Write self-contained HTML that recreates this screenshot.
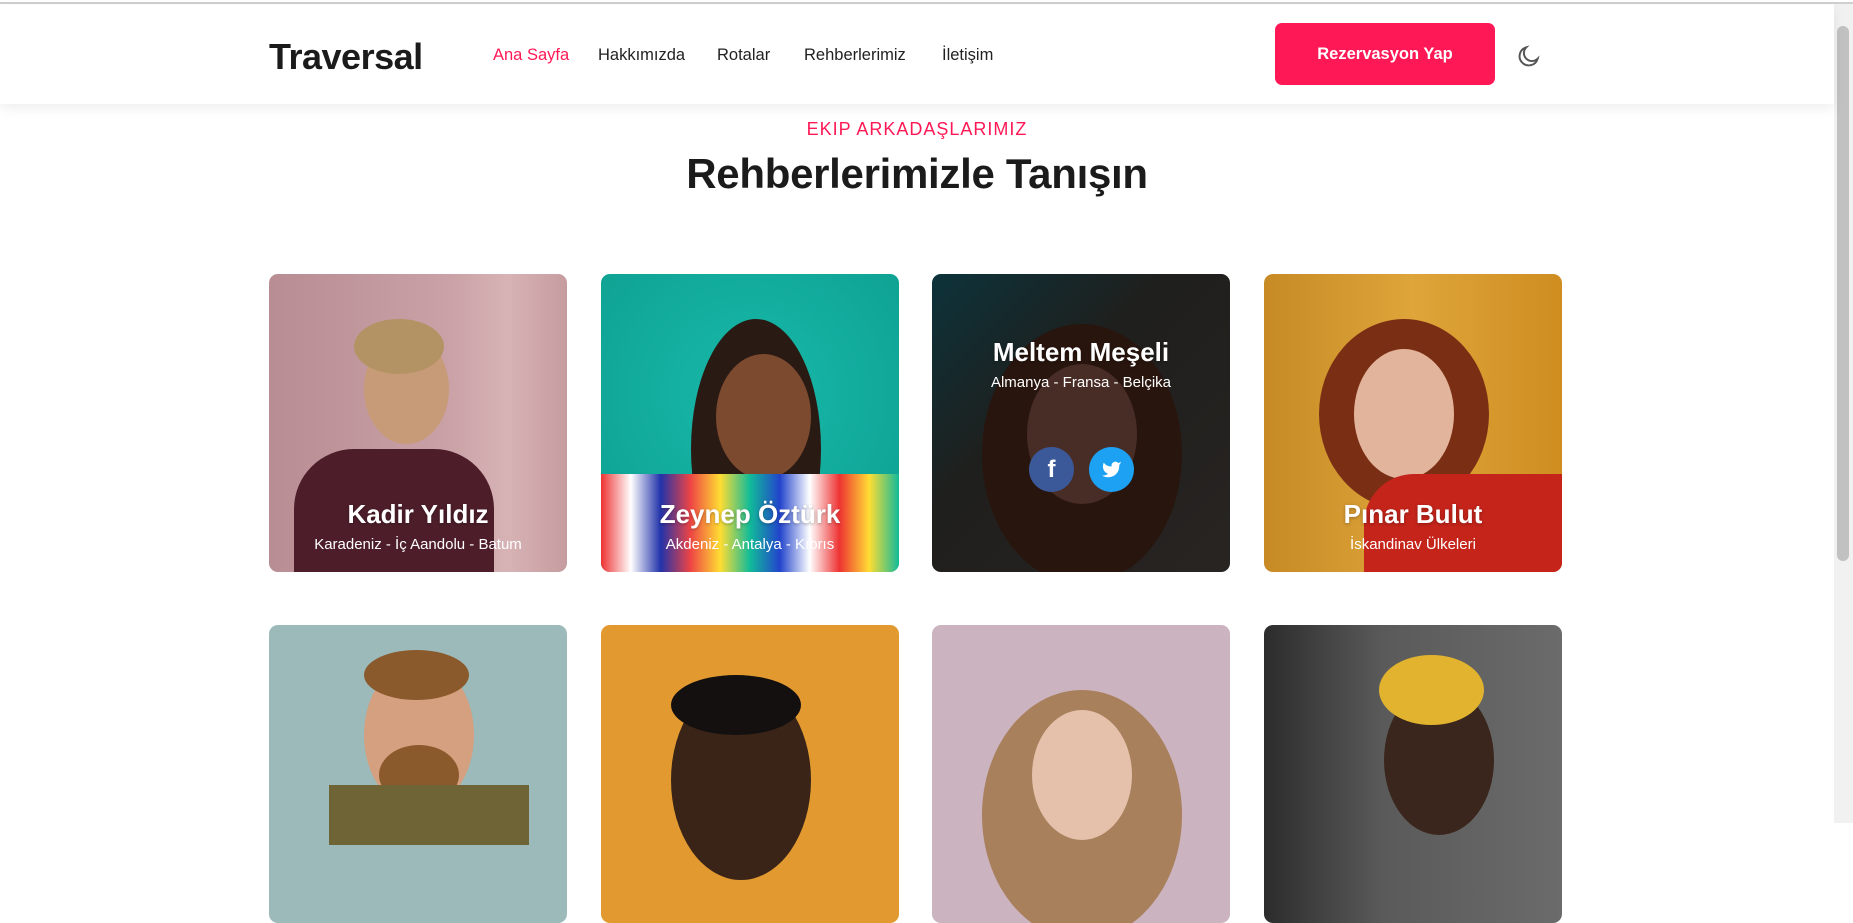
<!DOCTYPE html>
<html><head><meta charset="utf-8"><style>
*{margin:0;padding:0;box-sizing:border-box}
html,body{width:1853px;height:823px;overflow:hidden;background:#fff;font-family:"Liberation Sans",sans-serif}
.topline{position:absolute;left:0;top:0;width:1853px;height:4px;background:#fff;border-bottom:2px solid #cfcfcf}
header{position:absolute;left:0;top:5px;width:1834px;height:99px;background:#fff;box-shadow:0 4px 12px rgba(0,0,0,.07);z-index:2}
.logo{position:absolute;left:269px;top:31px;font-size:36px;font-weight:bold;color:#1b1b1b;letter-spacing:-.5px}
nav a{position:absolute;top:41px;font-size:16.5px;color:#222;text-decoration:none}
.btn{position:absolute;left:1275px;top:18px;width:220px;height:62px;background:#ff1856;border-radius:7px;color:#fff;font-weight:bold;font-size:16.5px;text-align:center;line-height:62px}
.moon{position:absolute;left:1516px;top:38px}
.scroll{position:absolute;left:1834px;top:4px;width:19px;height:819px;background:#f1f1f1}
.thumb{position:absolute;left:1837px;top:26px;width:12px;height:535px;background:#c1c1c1;border-radius:6px}
.kick{position:absolute;left:0;width:1834px;top:119px;text-align:center;color:#ff1856;font-size:18px;letter-spacing:1px}
h1{position:absolute;left:0;width:1834px;top:150px;text-align:center;font-size:42px;color:#1b1b1b;font-weight:bold;letter-spacing:-.3px}
.card{position:absolute;width:298px;height:298px;border-radius:9px;overflow:hidden}
.card .n{position:absolute;left:0;width:100%;text-align:center;color:#fff;font-weight:bold;font-size:26px;text-shadow:0 1px 3px rgba(0,0,0,.3)}
.card .s{position:absolute;left:0;width:100%;text-align:center;color:#fff;font-size:15px}
.blob{position:absolute;border-radius:50%}
</style></head><body>
<div class="topline"></div>
<header>
<div class="logo">Traversal</div>
<nav>
<a style="left:493px;color:#ff1856">Ana Sayfa</a>
<a style="left:598px">Hakkımızda</a>
<a style="left:717px">Rotalar</a>
<a style="left:804px">Rehberlerimiz</a>
<a style="left:942px">İletişim</a>
</nav>
<div class="btn">Rezervasyon Yap</div>
<svg class="moon" width="26" height="26" viewBox="0 0 24 24" fill="none" stroke="#555" stroke-width="1.8"><path d="M20 14.5A8.5 8.5 0 1 1 9.5 4a7 7 0 0 0 10.5 10.5z"/></svg>
</header>
<div class="scroll"></div><div class="thumb"></div>
<div class="kick">EKIP ARKADAŞLARIMIZ</div>
<h1>Rehberlerimizle Tanışın</h1>

<div class="card" style="left:269px;top:274px;background:linear-gradient(90deg,#b88d93,#c9a1a6 60%,#d7b3b5 80%,#c69c9f)">
<div class="blob" style="left:95px;top:60px;width:85px;height:110px;background:#c89b78"></div>
<div class="blob" style="left:85px;top:45px;width:90px;height:55px;background:#b39363"></div>
<div style="position:absolute;left:25px;top:175px;width:200px;height:160px;background:#4d1e2a;border-radius:60px 60px 0 0"></div>
<div class="n" style="top:225px">Kadir Yıldız</div><div class="s" style="top:262px">Karadeniz - İç Aandolu - Batum</div></div>

<div class="card" style="left:601px;top:274px;background:radial-gradient(circle at 50% 40%,#18b9aa,#0fa394 80%)">
<div class="blob" style="left:90px;top:45px;width:130px;height:260px;background:#2a1a14"></div>
<div class="blob" style="left:115px;top:80px;width:95px;height:125px;background:#7c4a2f"></div>
<div style="position:absolute;left:0;top:200px;width:298px;height:100px;background:linear-gradient(90deg,#e33,#fff 10%,#23a 20%,#e44 30%,#fd3 40%,#1b9 50%,#24c 60%,#fff 70%,#e33 80%,#fd3 90%,#1b9)"></div>
<div class="n" style="top:225px">Zeynep Öztürk</div><div class="s" style="top:262px">Akdeniz - Antalya - Kıbrıs</div></div>

<div class="card" style="left:932px;top:274px;background:linear-gradient(135deg,#0f4a55,#2b2b28 40%,#3a3430)">
<div class="blob" style="left:50px;top:50px;width:200px;height:260px;background:#3a1c12"></div>
<div class="blob" style="left:95px;top:90px;width:110px;height:140px;background:#6a4036"></div>
<div style="position:absolute;inset:0;background:rgba(10,10,10,.35)"></div>
<div class="n" style="top:63px">Meltem Meşeli</div><div class="s" style="top:100px">Almanya - Fransa - Belçika</div>
<div class="blob" style="left:97px;top:173px;width:45px;height:45px;background:#3b5998;color:#fff;font-weight:bold;font-size:24px;text-align:center;line-height:46px">f</div>
<div class="blob" style="left:157px;top:173px;width:45px;height:45px;background:#1da1f2"><svg width="45" height="45" viewBox="0 0 24 24"><path transform="translate(6.5 6.5) scale(.46)" fill="#fff" d="M23 3a10.9 10.9 0 0 1-3.1 1.5 4.5 4.5 0 0 0-7.9 3v1A10.7 10.7 0 0 1 3 4s-4 9 5 13a11.6 11.6 0 0 1-7 2c9 5 20 0 20-11.5a4.5 4.5 0 0 0-.1-.8A7.7 7.7 0 0 0 23 3z"/></svg></div></div>

<div class="card" style="left:1264px;top:274px;background:linear-gradient(90deg,#c78a25,#dea53a 50%,#cf8d20)">
<div class="blob" style="left:55px;top:45px;width:170px;height:190px;background:#7a2e14"></div>
<div class="blob" style="left:90px;top:75px;width:100px;height:130px;background:#e3b49c"></div>
<div style="position:absolute;left:100px;top:200px;width:220px;height:120px;background:#c4241a;border-radius:50px 0 0 0"></div>
<div class="n" style="top:225px">Pınar Bulut</div><div class="s" style="top:262px">İskandinav Ülkeleri</div></div>

<div class="card" style="left:269px;top:625px;background:#9bbab9">
<div class="blob" style="left:95px;top:35px;width:110px;height:150px;background:#d4a07f"></div>
<div class="blob" style="left:95px;top:25px;width:105px;height:50px;background:#8a5a2c"></div>
<div class="blob" style="left:110px;top:120px;width:80px;height:60px;background:#8a5a2c"></div>
<div style="position:absolute;left:60px;top:160px;width:200px;height:60px;background:#6e6436"></div></div>
<div class="card" style="left:601px;top:625px;background:#e29a30">
<div class="blob" style="left:70px;top:55px;width:140px;height:200px;background:#3a2418"></div>
<div class="blob" style="left:70px;top:50px;width:130px;height:60px;background:#141010"></div></div>
<div class="card" style="left:932px;top:625px;background:#cbb3bf">
<div class="blob" style="left:50px;top:65px;width:200px;height:250px;background:#a9805c"></div>
<div class="blob" style="left:100px;top:85px;width:100px;height:130px;background:#e5c0aa"></div></div>
<div class="card" style="left:1264px;top:625px;background:linear-gradient(90deg,#2c2c2c,#5a5a5a 40%,#6b6b6b)">
<div class="blob" style="left:120px;top:60px;width:110px;height:150px;background:#3a261c"></div>
<div class="blob" style="left:115px;top:30px;width:105px;height:70px;background:#e1b32e"></div></div>
</body></html>
